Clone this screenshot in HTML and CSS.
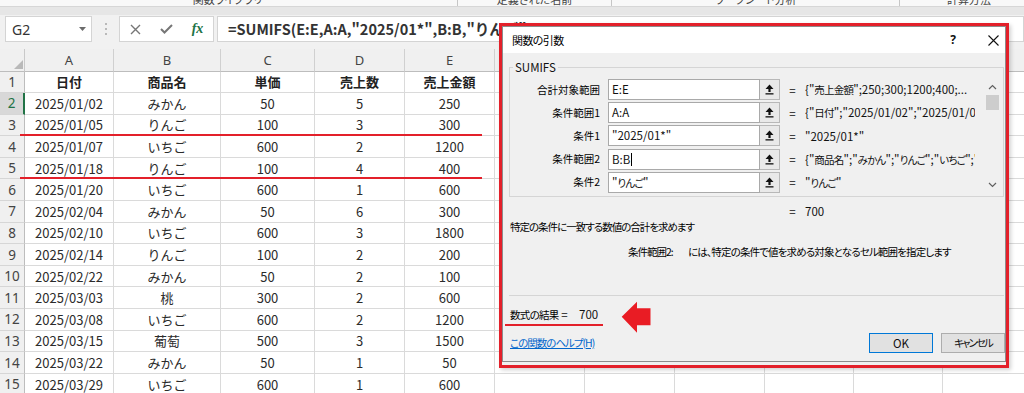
FILE: index.html
```html
<!DOCTYPE html>
<html lang="ja">
<head>
<meta charset="utf-8">
<title>SUMIFS</title>
<link rel="stylesheet" href="styles.css">
</head>
<body>
<div class="app">
  <div class="ribbon-tail">
    <div class="rgroup rg1"><span>関数ライブラリ</span></div>
    <div class="rgroup rg2"><span>定義された名前</span></div>
    <div class="rgroup rg3"><span>ワークシート分析</span></div>
    <div class="rgroup rg4"><span>計算方法</span></div>
  </div>
  <div class="band"></div>
  <div class="fbar">
    <div class="namebox"><span>G2</span><svg width="7" height="4" viewBox="0 0 7 4"><path d="M0 0H7L3.5 4Z" fill="#6b6b6b"/></svg></div>
    <div class="grip"><svg width="2" height="12" viewBox="0 0 2 12"><circle cx="1" cy="1" r="1" fill="#a6a6a6"/><circle cx="1" cy="6" r="1" fill="#a6a6a6"/><circle cx="1" cy="11" r="1" fill="#a6a6a6"/></svg></div>
    <div class="fbtns">
      <span class="fb"><svg width="11" height="11" viewBox="0 0 11 11"><path d="M1 1L10 10M10 1L1 10" stroke="#767676" stroke-width="1.4"/></svg></span>
      <span class="fb"><svg width="13" height="10" viewBox="0 0 13 10"><path d="M1 5L4.5 8.5L12 1" stroke="#767676" stroke-width="2" fill="none"/></svg></span>
      <span class="fb fx">fx</span>
    </div>
    <div class="finput">=SUMIFS(E:E,A:A,"2025/01*",B:B,"りんご")</div>
  </div>

  <div class="sheet">
    <div class="row colhdr">
      <div class="corner"><svg width="9" height="9" viewBox="0 0 9 9"><path d="M9 0V9H0Z" fill="#b9b9b9"/></svg></div>
      <div class="ch">A</div><div class="ch">B</div><div class="ch">C</div><div class="ch">D</div><div class="ch">E</div><div class="ch">F</div><div class="ch">G</div><div class="ch">H</div><div class="ch">I</div><div class="ch">J</div><div class="ch">K</div>
    </div>
    <div class="row"><div class="rh">1</div><div class="c b">日付</div><div class="c b">商品名</div><div class="c b">単価</div><div class="c b">売上数</div><div class="c b">売上金額</div><div class="c"></div><div class="c"></div><div class="c"></div><div class="c"></div><div class="c"></div><div class="c"></div></div>
    <div class="row"><div class="rh sel">2</div><div class="c">2025/01/02</div><div class="c">みかん</div><div class="c">50</div><div class="c">5</div><div class="c">250</div><div class="c"></div><div class="c"></div><div class="c"></div><div class="c"></div><div class="c"></div><div class="c"></div></div>
    <div class="row"><div class="rh">3</div><div class="c">2025/01/05</div><div class="c">りんご</div><div class="c">100</div><div class="c">3</div><div class="c">300</div><div class="c"></div><div class="c"></div><div class="c"></div><div class="c"></div><div class="c"></div><div class="c"></div></div>
    <div class="row"><div class="rh">4</div><div class="c">2025/01/07</div><div class="c">いちご</div><div class="c">600</div><div class="c">2</div><div class="c">1200</div><div class="c"></div><div class="c"></div><div class="c"></div><div class="c"></div><div class="c"></div><div class="c"></div></div>
    <div class="row"><div class="rh">5</div><div class="c">2025/01/18</div><div class="c">りんご</div><div class="c">100</div><div class="c">4</div><div class="c">400</div><div class="c"></div><div class="c"></div><div class="c"></div><div class="c"></div><div class="c"></div><div class="c"></div></div>
    <div class="row"><div class="rh">6</div><div class="c">2025/01/20</div><div class="c">いちご</div><div class="c">600</div><div class="c">1</div><div class="c">600</div><div class="c"></div><div class="c"></div><div class="c"></div><div class="c"></div><div class="c"></div><div class="c"></div></div>
    <div class="row"><div class="rh">7</div><div class="c">2025/02/04</div><div class="c">みかん</div><div class="c">50</div><div class="c">6</div><div class="c">300</div><div class="c"></div><div class="c"></div><div class="c"></div><div class="c"></div><div class="c"></div><div class="c"></div></div>
    <div class="row"><div class="rh">8</div><div class="c">2025/02/10</div><div class="c">いちご</div><div class="c">600</div><div class="c">3</div><div class="c">1800</div><div class="c"></div><div class="c"></div><div class="c"></div><div class="c"></div><div class="c"></div><div class="c"></div></div>
    <div class="row"><div class="rh">9</div><div class="c">2025/02/14</div><div class="c">りんご</div><div class="c">100</div><div class="c">2</div><div class="c">200</div><div class="c"></div><div class="c"></div><div class="c"></div><div class="c"></div><div class="c"></div><div class="c"></div></div>
    <div class="row"><div class="rh">10</div><div class="c">2025/02/22</div><div class="c">みかん</div><div class="c">50</div><div class="c">2</div><div class="c">100</div><div class="c"></div><div class="c"></div><div class="c"></div><div class="c"></div><div class="c"></div><div class="c"></div></div>
    <div class="row"><div class="rh">11</div><div class="c">2025/03/03</div><div class="c">桃</div><div class="c">300</div><div class="c">2</div><div class="c">600</div><div class="c"></div><div class="c"></div><div class="c"></div><div class="c"></div><div class="c"></div><div class="c"></div></div>
    <div class="row"><div class="rh">12</div><div class="c">2025/03/08</div><div class="c">いちご</div><div class="c">600</div><div class="c">2</div><div class="c">1200</div><div class="c"></div><div class="c"></div><div class="c"></div><div class="c"></div><div class="c"></div><div class="c"></div></div>
    <div class="row"><div class="rh">13</div><div class="c">2025/03/15</div><div class="c">葡萄</div><div class="c">500</div><div class="c">3</div><div class="c">1500</div><div class="c"></div><div class="c"></div><div class="c"></div><div class="c"></div><div class="c"></div><div class="c"></div></div>
    <div class="row"><div class="rh">14</div><div class="c">2025/03/22</div><div class="c">みかん</div><div class="c">50</div><div class="c">1</div><div class="c">50</div><div class="c"></div><div class="c"></div><div class="c"></div><div class="c"></div><div class="c"></div><div class="c"></div></div>
    <div class="row"><div class="rh">15</div><div class="c">2025/03/29</div><div class="c">いちご</div><div class="c">600</div><div class="c">1</div><div class="c">600</div><div class="c"></div><div class="c"></div><div class="c"></div><div class="c"></div><div class="c"></div><div class="c"></div></div>
  </div>

  <div class="mark mark-r3"></div>
  <div class="mark mark-r5"></div>

  <div class="hl">
    <div class="dlg">
      <div class="title">
        <span class="ttext">関数の引数</span>
        <span class="tq">?</span>
        <span class="tx"><svg width="11" height="11" viewBox="0 0 11 11"><path d="M0.5 0.5L10.5 10.5M10.5 0.5L0.5 10.5" stroke="#111" stroke-width="1.1"/></svg></span>
      </div>
      <fieldset class="grp">
        <legend>SUMIFS</legend>
        <div class="grp-body">
          <div class="args">
            <div class="arg"><span class="al">合計対象範囲</span><span class="inp">E:E</span><span class="ref"><svg width="9" height="11" viewBox="0 0 9 11"><path d="M4.5 0.5L8.5 5H5.6V8H3.4V5H0.5Z" fill="#111"/><rect x="0.5" y="9.2" width="8" height="1.3" fill="#111"/></svg></span><span class="eq">=</span><span class="val">{"<span class="jv">売上金額</span>";250;300;1200;400;...</span></div>
            <div class="arg"><span class="al">条件範囲1</span><span class="inp">A:A</span><span class="ref"><svg width="9" height="11" viewBox="0 0 9 11"><path d="M4.5 0.5L8.5 5H5.6V8H3.4V5H0.5Z" fill="#111"/><rect x="0.5" y="9.2" width="8" height="1.3" fill="#111"/></svg></span><span class="eq">=</span><span class="val">{"<span class="jv">日付</span>";"2025/01/02";"2025/01/05</span></div>
            <div class="arg"><span class="al">条件1</span><span class="inp">"2025/01*"</span><span class="ref"><svg width="9" height="11" viewBox="0 0 9 11"><path d="M4.5 0.5L8.5 5H5.6V8H3.4V5H0.5Z" fill="#111"/><rect x="0.5" y="9.2" width="8" height="1.3" fill="#111"/></svg></span><span class="eq">=</span><span class="val">"2025/01*"</span></div>
            <div class="arg"><span class="al">条件範囲2</span><span class="inp">B:B<span class="caret"></span></span><span class="ref"><svg width="9" height="11" viewBox="0 0 9 11"><path d="M4.5 0.5L8.5 5H5.6V8H3.4V5H0.5Z" fill="#111"/><rect x="0.5" y="9.2" width="8" height="1.3" fill="#111"/></svg></span><span class="eq">=</span><span class="val">{"<span class="jv">商品名</span>";"<span class="jv">みかん</span>";"<span class="jv">りんご</span>";"<span class="jv">いちご</span>";"<span class="jv">りんご</span>"</span></div>
            <div class="arg"><span class="al">条件2</span><span class="inp">"<span class="jv">りんご</span>"</span><span class="ref"><svg width="9" height="11" viewBox="0 0 9 11"><path d="M4.5 0.5L8.5 5H5.6V8H3.4V5H0.5Z" fill="#111"/><rect x="0.5" y="9.2" width="8" height="1.3" fill="#111"/></svg></span><span class="eq">=</span><span class="val">"<span class="jv">りんご</span>"</span></div>
          </div>
          <div class="vscroll">
            <span class="sarrow"><svg width="9" height="6" viewBox="0 0 9 6"><path d="M1 5L4.5 1.5L8 5" stroke="#606060" stroke-width="1.2" fill="none"/></svg></span>
            <span class="thumb"></span>
            <span class="sarrow down"><svg width="9" height="6" viewBox="0 0 9 6"><path d="M1 1L4.5 4.5L8 1" stroke="#606060" stroke-width="1.2" fill="none"/></svg></span>
          </div>
        </div>
      </fieldset>
      <div class="eqrow"><span class="eq">=</span><span>700</span></div>
      <div class="desc">特定の条件に一致する数値の合計を求めます</div>
      <div class="arghelp"><span class="an">条件範囲2:</span><span class="ah">には、特定の条件で値を求める対象となるセル範囲を指定します</span></div>
      <div class="sep"></div>
      <div class="result"><span class="rl"><span class="rlt">数式の結果</span> =</span><span>700</span></div>
      <div class="foot">
        <a class="help" href="#">この関数のヘルプ(H)</a>
        <div class="btns"><span class="btn ok">OK</span><span class="btn cancel">キャンセル</span></div>
      </div>
    </div>
  </div>

  <div class="mark mark-res"></div>
  <svg class="arrow" width="30" height="33" viewBox="0 0 30 33"><path d="M0.7 15.7L16 0.7V7.2H29.5V24.2H16V31.7Z" fill="#e91c24"/></svg>
</div>
</body>
</html>
```

FILE: styles.css
```css
* { box-sizing: border-box; }
html, body { margin: 0; padding: 0; }
body {
  width: 1024px;
  height: 393px;
  overflow: hidden;
  background: #fff;
  font-family: "Noto Sans CJK JP", "Noto Sans", sans-serif;
  color: #222;
}
.app { position: relative; width: 1024px; height: 393px; overflow: hidden; }

/* ribbon tail */
.ribbon-tail {
  height: 7px;
  overflow: hidden;
  display: flex;
  background: #f8f8f8;
  border-bottom: 1px solid #d6d6d6;
}
.rgroup {
  flex: none;
  display: flex;
  justify-content: center;
  align-items: flex-start;
  border-right: 1px solid #c6c6c6;
  font-size: 11px;
  line-height: 14px;
  color: #444;
  font-feature-settings: "palt";
}
.rgroup span { margin-top: -8px; }
.rg1 { width: 460px; margin-left: -2px; }
.rg2 { width: 154px; }
.rg3 { width: 288px; }
.rg4 { width: 138px; border-right: none; }

.band { height: 8px; background: #e6e6e6; }

/* formula bar */
.fbar {
  height: 34px;
  background: #f1f1f1;
  display: flex;
  align-items: flex-start;
  padding-top: 1px;
}
.namebox {
  margin-left: 5px;
  width: 87px;
  height: 26px;
  background: #fff;
  border: 1px solid #d4d4d4;
  display: flex;
  align-items: center;
  justify-content: space-between;
  padding: 0 5px 0 6px;
  font-family: "Noto Sans", sans-serif;
  font-size: 14px;
  color: #333;
}
.grip { width: 27px; height: 26px; display: flex; align-items: center; justify-content: center; }
.fbtns {
  width: 95px;
  height: 26px;
  background: #fff;
  border: 1px solid #d4d4d4;
  display: grid;
  grid-template-columns: 31px 31px 31px;
  align-items: center;
}
.fb { display: flex; justify-content: center; align-items: center; }
.fx {
  font-family: "Liberation Serif", serif;
  font-style: italic;
  font-weight: bold;
  font-size: 14px;
  color: #217346;
}
.finput {
  flex: 1;
  margin-left: 3px;
  height: 26px;
  background: #fff;
  border: 1px solid #d4d4d4;
  padding-left: 10px;
  font-size: 14.5px;
  font-weight: 600;
  line-height: 24px;
  color: #333;
  white-space: nowrap;
  overflow: hidden;
}

/* sheet */
.sheet { display: flex; flex-direction: column; width: 1033px; }
.row {
  display: grid;
  grid-template-columns: 25px 89px 107px 94px 90px 90px 90px 90px 90px 89px 89px 90px;
  height: 21.6px;
}
.row.colhdr { height: 22.5px; }
.corner {
  background: #f0f0f0;
  border-right: 1px solid #c9c9c9;
  border-bottom: 1px solid #bdbdbd;
  display: flex;
  align-items: flex-end;
  justify-content: flex-end;
  padding: 0 1px 2px 0;
}
.ch {
  background: #f0f0f0;
  border-right: 1px solid #d0d0d0;
  border-bottom: 1px solid #bdbdbd;
  display: flex;
  align-items: center;
  justify-content: center;
  font-family: "Noto Sans", sans-serif;
  font-size: 13px;
  color: #444;
}
.rh {
  background: #f0f0f0;
  border-right: 1px solid #bdbdbd;
  border-bottom: 1px solid #d6d6d6;
  display: flex;
  align-items: center;
  justify-content: center;
  font-family: "Noto Sans", sans-serif;
  font-size: 13.5px;
  color: #444;
}
.rh.sel {
  background: #d8d8d8;
  color: #217346;
  border-right: 2px solid #217346;
}
.c {
  border-right: 1px solid #dadada;
  border-bottom: 1px solid #dadada;
  display: flex;
  align-items: center;
  justify-content: center;
  font-size: 13px;
  color: #2b2b2b;
  white-space: nowrap;
  overflow: hidden;
}
.c.b { font-weight: bold; color: #222; }

/* red marks */
.mark { position: absolute; background: #e3202a; height: 2px; }
.mark-r3 { left: 20px; top: 134px; width: 462px; }
.mark-r5 { left: 20px; top: 177px; width: 462px; }
.mark-res { left: 505px; top: 324px; width: 98px; }
.arrow { position: absolute; left: 621px; top: 301px; }

/* dialog */
.hl {
  position: absolute;
  left: 499px;
  top: 23px;
  width: 510px;
  height: 345px;
  border: 3px solid #e3202a;
  background: #f0f0f0;
  box-shadow: 2px 2px 4px rgba(0, 0, 0, 0.18);
}
.dlg {
  width: 504px;
  height: 336px;
  background: #f0f0f0;
  border: 1px solid #8c8c8c;
  display: flex;
  flex-direction: column;
  font-size: 11.5px;
  line-height: 16px;
  font-feature-settings: "palt";
  color: #111;
}
.title {
  height: 26px;
  flex: none;
  background: #fff;
  display: flex;
  align-items: center;
  padding-left: 9px;
}
.ttext { font-size: 11px; letter-spacing: -0.6px; color: #000; }
.tq {
  margin-left: auto;
  width: 24px;
  margin-right: 16px;
  text-align: center;
  font-family: "Noto Sans", sans-serif;
  font-weight: bold;
  font-size: 12px;
}
.tx { width: 24px; display: flex; justify-content: center; }

.grp {
  margin: 6px 1px 0 6px;
  padding: 4px 3px 3px 0;
  border: 1px solid #d5d5d5;
  min-width: 0;
  flex: none;
}
.grp legend {
  margin-left: 3px;
  padding: 0 2px;
  font-size: 11.5px;
  line-height: 16px;
}
.grp-body { display: flex; }
.args { width: 473px; display: flex; flex-direction: column; gap: 2.2px; }
.arg {
  display: grid;
  grid-template-columns: 98px 152px 20px 25px 170px;
  height: 21px;
  align-items: center;
}
.al { text-align: right; padding-right: 8px; white-space: nowrap; font-size: 10.5px; color: #000; }
.inp {
  height: 21px;
  background: #fff;
  border: 1px solid #a9a9a9;
  padding-left: 3px;
  line-height: 19px;
  white-space: nowrap;
  overflow: hidden;
  display: flex;
  align-items: center;
}
.jv { font-size: 10.5px; letter-spacing: -0.8px; }
.caret { display: inline-block; width: 1px; height: 13px; background: #000; margin-left: 1px; }
.ref {
  height: 21px;
  background: #e9e9e9;
  border: 1px solid #b8b8b8;
  border-left: none;
  display: flex;
  align-items: center;
  justify-content: center;
}
.eq { text-align: center; }
.val { white-space: nowrap; overflow: hidden; }
.vscroll {
  margin-left: auto;
  width: 16px;
  display: flex;
  flex-direction: column;
  align-items: center;
}
.sarrow { height: 16px; display: flex; align-items: center; justify-content: center; }
.thumb { width: 13px; height: 15px; background: #cdcdcd; }
.sarrow.down { margin-top: auto; }

.eqrow { margin-top: 6px; height: 16px; padding-left: 277px; display: flex; }
.eqrow .eq { width: 25px; }
.desc { height: 16px; padding-left: 7px; font-size: 10.5px; letter-spacing: -1px; color: #000; }
.arghelp { margin-top: 9px; height: 16px; padding-left: 125px; display: flex; font-size: 10.5px; color: #000; }
.an { width: 60px; letter-spacing: -1px; }
.ah { letter-spacing: -0.85px; }
.sep { margin: 35px 1px 0 6px; height: 1px; background: #d5d5d5; flex: none; }
.result { margin-top: 10px; height: 16px; padding-left: 7px; display: flex; }
.rl { width: 69px; }
.rlt { font-size: 10.5px; letter-spacing: -0.7px; color: #000; }
.foot {
  margin-top: 11px;
  height: 20px;
  display: flex;
  align-items: center;
  padding: 0 0 0 7px;
}
.help { color: #0066cc; text-decoration: underline; font-size: 10.5px; letter-spacing: -1px; }
.btns { margin-left: auto; display: flex; gap: 8px; }
.btn {
  width: 64px;
  height: 20px;
  background: #e1e1e1;
  border: 1px solid #adadad;
  display: flex;
  align-items: center;
  justify-content: center;
}
.btn.ok { border-color: #0078d7; }
.btn.cancel { font-size: 10.5px; letter-spacing: -2px; }
```
